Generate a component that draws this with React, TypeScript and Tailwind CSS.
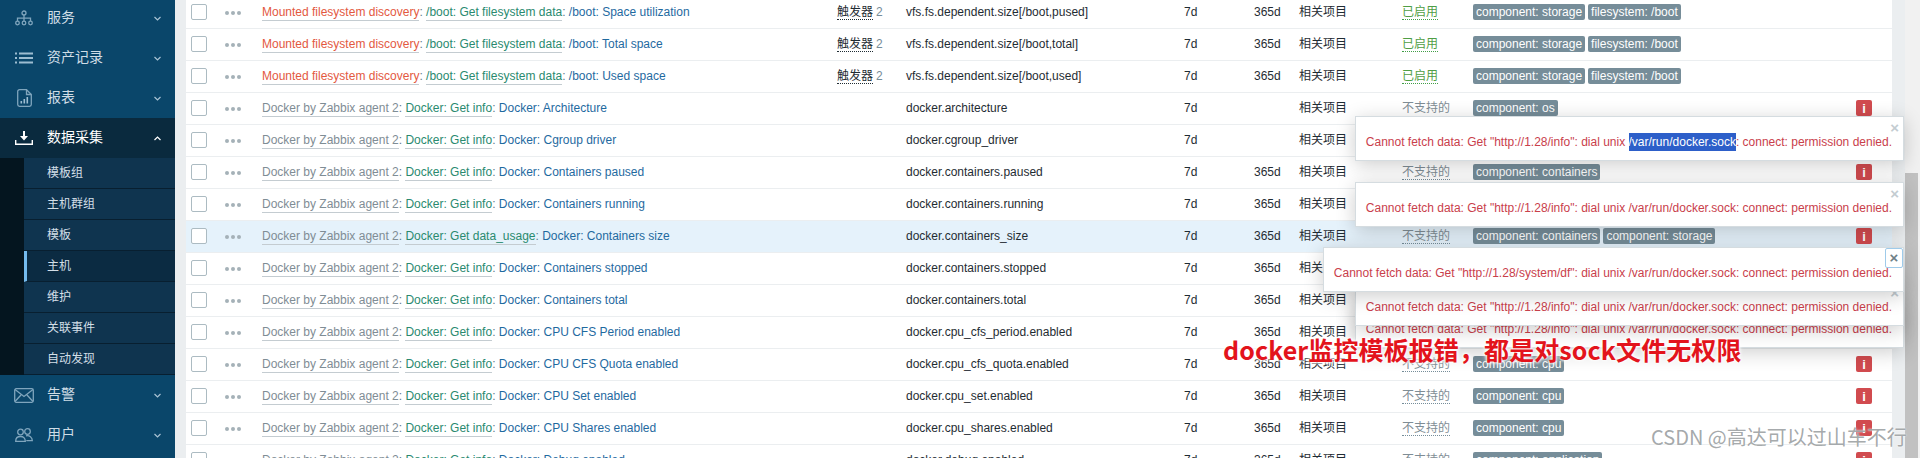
import React from "react";

const FONT = "[font-family:'Liberation_Sans','Noto_Sans_CJK_SC',sans-serif]";

type Row = {
  prefix: string;
  red?: boolean;
  group: string;
  name: string;
  trig?: boolean;
  key: string;
  hist?: boolean;
  on?: boolean;
  plainStatus?: boolean;
  tags: string[];
  hl?: boolean;
};

const D = "Docker by Zabbix agent 2";
const M = "Mounted filesystem discovery";
const GF = "/boot: Get filesystem data";
const GI = "Docker: Get info";

const rows: Row[] = [
  { prefix: M, red: true, group: GF, name: "/boot: Space utilization", trig: true, key: "vfs.fs.dependent.size[/boot,pused]", hist: true, on: true, tags: ["component: storage", "filesystem: /boot"] },
  { prefix: M, red: true, group: GF, name: "/boot: Total space", trig: true, key: "vfs.fs.dependent.size[/boot,total]", hist: true, on: true, tags: ["component: storage", "filesystem: /boot"] },
  { prefix: M, red: true, group: GF, name: "/boot: Used space", trig: true, key: "vfs.fs.dependent.size[/boot,used]", hist: true, on: true, tags: ["component: storage", "filesystem: /boot"] },
  { prefix: D, group: GI, name: "Docker: Architecture", key: "docker.architecture", plainStatus: true, tags: ["component: os"] },
  { prefix: D, group: GI, name: "Docker: Cgroup driver", key: "docker.cgroup_driver", tags: ["component: os"] },
  { prefix: D, group: GI, name: "Docker: Containers paused", key: "docker.containers.paused", hist: true, tags: ["component: containers"] },
  { prefix: D, group: GI, name: "Docker: Containers running", key: "docker.containers.running", hist: true, tags: ["component: containers"] },
  { prefix: D, group: "Docker: Get data_usage", name: "Docker: Containers size", key: "docker.containers_size", hist: true, tags: ["component: containers", "component: storage"], hl: true },
  { prefix: D, group: GI, name: "Docker: Containers stopped", key: "docker.containers.stopped", hist: true, tags: ["component: containers"] },
  { prefix: D, group: GI, name: "Docker: Containers total", key: "docker.containers.total", hist: true, tags: ["component: containers"] },
  { prefix: D, group: GI, name: "Docker: CPU CFS Period enabled", key: "docker.cpu_cfs_period.enabled", hist: true, tags: ["component: cpu"] },
  { prefix: D, group: GI, name: "Docker: CPU CFS Quota enabled", key: "docker.cpu_cfs_quota.enabled", hist: true, tags: ["component: cpu"] },
  { prefix: D, group: GI, name: "Docker: CPU Set enabled", key: "docker.cpu_set.enabled", hist: true, tags: ["component: cpu"] },
  { prefix: D, group: GI, name: "Docker: CPU Shares enabled", key: "docker.cpu_shares.enabled", hist: true, tags: ["component: cpu"] },
  { prefix: D, group: GI, name: "Docker: Debug enabled", key: "docker.debug.enabled", hist: true, tags: ["component: application"] },
];

const S = { fill: "none", stroke: "#7fa5bd", strokeWidth: 1.3 } as const;

function IconServices() {
  return (
    <svg width="18" height="16" viewBox="0 0 18 16" {...S}>
      <circle cx="9" cy="3" r="2" />
      <circle cx="2.5" cy="13" r="1.8" />
      <circle cx="9" cy="13" r="1.8" />
      <circle cx="15.5" cy="13" r="1.8" />
      <path d="M9 5v6M2.5 11V8.2h13V11" />
    </svg>
  );
}
function IconList() {
  return (
    <svg width="18" height="12" viewBox="0 0 18 12" fill="#9dbdd1">
      <rect x="0" y="0.5" width="2" height="2" />
      <rect x="0" y="5" width="2" height="2" />
      <rect x="0" y="9.5" width="2" height="2" />
      <rect x="4" y="0.5" width="14" height="2" />
      <rect x="4" y="5" width="14" height="2" />
      <rect x="4" y="9.5" width="14" height="2" />
    </svg>
  );
}
function IconReport() {
  return (
    <svg width="15" height="18" viewBox="0 0 15 18" {...S}>
      <path d="M2.5 .7h7l4.800 4.800v10a1.800 1.800 0 0 1-1.800 1.800h-10A1.800 1.800 0 0 1 .7 15.500v-13A1.800 1.800 0 0 1 2.500 .7z" />
      <path d="M9.500 .7v4.800h4.800" />
      <rect x="3.500" y="12" width="1.600" height="2.500" fill="#9dbdd1" stroke="none" />
      <rect x="6.500" y="10" width="1.600" height="4.500" fill="#9dbdd1" stroke="none" />
      <rect x="9.500" y="8" width="1.600" height="6.500" fill="#9dbdd1" stroke="none" />
    </svg>
  );
}
function IconDownload() {
  return (
    <svg width="18" height="15" viewBox="0 0 18 15" fill="#fff">
      <path d="M8 0h2v5h3l-4 4.500L5 5h3z" />
      <path d="M0 9h1.400v3.600h15.200V9H18v5H0z" />
    </svg>
  );
}
function IconMail() {
  return (
    <svg width="20" height="15" viewBox="0 0 20 15" {...S}>
      <rect x=".7" y=".7" width="18.600" height="13.600" rx="1.500" />
      <path d="M1 1.500l9 7 9-7M1 13.500l6-6.500M19 13.500l-6-6.500" />
    </svg>
  );
}
function IconUsers() {
  return (
    <svg width="18" height="14" viewBox="0 0 18 14" {...S}>
      <circle cx="5.500" cy="4" r="2.800" />
      <circle cx="12.500" cy="3.500" r="2.800" />
      <path d="M.7 13.300c0-3 2-4.800 4.800-4.800s4.800 1.800 4.800 4.800zM11 7.800c3.500-.8 6.300 1.500 6.300 4.800h-6" />
    </svg>
  );
}
function Chevron({ up }: { up?: boolean }) {
  return (
    <svg width="7" height="5" viewBox="0 0 7 5" fill="none" stroke={up ? "#fff" : "#a9c3d4"} strokeWidth="1.2" className="ml-auto mr-[14px]">
      <path d={up ? "M.5 4L3.500 1l3 3" : "M.5 1l3 3 3-3"} />
    </svg>
  );
}

function MenuItem({ icon, label, active }: { icon: React.ReactNode; label: string; active?: boolean }) {
  return (
    <div className={`flex h-[40px] items-center text-[14px] ${active ? "bg-[#0a2a3e] text-white" : "text-[#cfdde6]"}`}>
      <span className="mr-[-1px] flex w-[48px] justify-center px-[1px]">{icon}</span>
      <span className="pb-[2px]">{label}</span>
      <Chevron up={active} />
    </div>
  );
}

function Sidebar() {
  const subs = ["模板组", "主机群组", "模板", "主机", "维护", "关联事件", "自动发现"];
  return (
    <div className="-mt-[2px] w-[175px] shrink-0 bg-[#0a466a]">
      <MenuItem icon={<IconServices />} label="服务" />
      <MenuItem icon={<IconList />} label="资产记录" />
      <MenuItem icon={<IconReport />} label="报表" />
      <MenuItem icon={<IconDownload />} label="数据采集" active />
      <div className="bg-[#04151f] pl-[24px]">
        {subs.map((s) => (
          <div
            key={s}
            className={`flex h-[31px] items-center border-b border-[#081f30] text-[12px] text-[#d3dfe7] ${s === "主机" ? "border-l-[3px] border-l-[#74bbee] bg-[#0b2b42] pl-[20px]" : "bg-[#0f344f] pl-[23px]"}`}
          >
            {s}
          </div>
        ))}
      </div>
      <MenuItem icon={<IconMail />} label="告警" />
      <MenuItem icon={<IconUsers />} label="用户" />
      <div className="h-[10px]" />
    </div>
  );
}

function Dots() {
  return (
    <div className="flex gap-[2px] pt-[1px]">
      <i className="block h-[4px] w-[4px] rounded-full bg-[#a5b1b8]" />
      <i className="block h-[4px] w-[4px] rounded-full bg-[#a5b1b8]" />
      <i className="block h-[4px] w-[4px] rounded-full bg-[#a5b1b8]" />
    </div>
  );
}

function Info() {
  return (
    <div className="flex h-[16px] w-[16px] items-center justify-center rounded-[2px] bg-[#d14b4f] text-[13px] font-bold leading-none text-white">
      i
    </div>
  );
}

function TableRow({ r }: { r: Row }) {
  return (
    <div
      className={`grid h-[32px] grid-cols-[39px_37px_575px_69px_278px_70px_45px_103px_71px_383px_1fr] items-center border-b border-[#ebeef0] pb-[1px] text-[#1f2c33] ${r.hl ? "bg-[#e5f2fb]" : "bg-white"}`}
    >
      <div className="pl-[5px]">
        <div className="h-[16px] w-[16px] rounded-[2px] border border-[#acbbc2] bg-white" />
      </div>
      <Dots />
      <div className="whitespace-nowrap">
        <span className={`border-b border-[#c4ccd1] pb-[1px] ${r.red ? "text-[#e3593f]" : "text-[#7f8d95]"}`}>{r.prefix}</span>
        <span className="text-[#5f7a88]">: </span>
        <span className="border-b border-[#c4ccd1] pb-[1px] text-[#2a8a6f]">{r.group}</span>
        <span className="text-[#5f7a88]">: </span>
        <span className="text-[#1f6a9f]">{r.name}</span>
      </div>
      <div>
        {r.trig && (
          <>
            <span className="border-b border-dotted border-[#1f2c33]">触发器</span>
            <span className="ml-[3px] text-[#768d99]">2</span>
          </>
        )}
      </div>
      <div className="whitespace-nowrap">{r.key}</div>
      <div>7d</div>
      <div>{r.hist ? "365d" : ""}</div>
      <div>相关项目</div>
      <div>
        <span
          className={`${r.plainStatus ? "" : "border-b border-dotted"} ${r.on ? "border-[#429e47] text-[#4f9e45]" : "border-[#768d99] text-[#7f8d95]"}`}
        >
          {r.on ? "已启用" : "不支持的"}
        </span>
      </div>
      <div className="flex gap-[3px]">
        {r.tags.map((t) => (
          <span key={t} className="flex h-[16px] items-center rounded-[2px] bg-[#768d99] px-[3px] text-white">
            {t}
          </span>
        ))}
      </div>
      <div>{!r.on && <Info />}</div>
    </div>
  );
}

function Popup({ top, children, focus, z }: { top: string; children: React.ReactNode; focus?: boolean; z: string }) {
  return (
    <div
      className={`absolute ${top} right-[16px] ${z} h-[45px] border border-[#d5dce0] bg-white pl-[10px] pr-[11px] pt-[18px] text-[12px] leading-[14px] whitespace-nowrap text-[#c9404b] shadow-[0_4px_20px_rgba(0,0,0,0.2)]`}
    >
      {children}
      {focus ? (
        <div className="absolute right-0 top-0 flex h-[20px] w-[18px] items-center justify-center rounded-[2px] border border-[#9fcbea] bg-white text-[15px] font-bold text-[#6f7f88]">
          ×
        </div>
      ) : (
        <div className="absolute right-[4px] top-[2px] text-[15px] font-bold leading-[18px] text-[#c3ccd1]">×</div>
      )}
    </div>
  );
}

export default function App() {
  return (
    <div className={`relative flex h-[458px] w-[1920px] overflow-hidden bg-[#ebeef0] text-[12px] ${FONT}`}>
      <Sidebar />
      <div className="-mt-[3px] ml-[11px] w-[1706px] shrink-0">
        {rows.map((r) => (
          <TableRow key={r.key} r={r} />
        ))}
      </div>
      <div className="ml-[13px] flex w-[15px] flex-col bg-[#f1f1f1] pt-[173px]">
        <div className="h-full w-[13px] bg-[#c1c1c1]" />
      </div>

      <Popup top="top-[116px]" z="z-20">
        Cannot fetch data: Get "http://1.28/info": dial unix{" "}
        <span className="bg-[#2d5fc9] py-[2px] text-white">/var/run/docker.sock</span>: connect: permission denied.
      </Popup>
      <Popup top="top-[182px]" z="z-20">
        Cannot fetch data: Get "http://1.28/info": dial unix /var/run/docker.sock: connect: permission denied.
      </Popup>
      <Popup top="top-[303px]" z="z-10">
        Cannot fetch data: Get "http://1.28/info": dial unix /var/run/docker.sock: connect: permission denied.
      </Popup>
      <Popup top="top-[281px]" z="z-20">
        Cannot fetch data: Get "http://1.28/info": dial unix /var/run/docker.sock: connect: permission denied.
      </Popup>
      <Popup top="top-[247px]" z="z-30" focus>
        Cannot fetch data: Get "http://1.28/system/df": dial unix /var/run/docker.sock: connect: permission denied.
      </Popup>

      <div className="absolute left-[1223px] top-[332px] z-40 whitespace-nowrap text-[25px] font-bold leading-[34px] tracking-[0.1px] text-[#e3141c] [font-family:'Noto_Sans_CJK_SC',sans-serif] [text-shadow:0_0_3px_#fff,0_0_3px_#fff,0_0_5px_#fff]">
        docker监控模板报错，都是对sock文件无权限
      </div>
      <div className="absolute left-[1651px] top-[425px] z-40 whitespace-nowrap text-[20px] leading-[24px] text-[#9a9ea1]/90 [font-family:'Noto_Sans_CJK_SC',sans-serif] [text-shadow:0_0_2px_#fff]">
        CSDN @高达可以过山车不行
      </div>
    </div>
  );
}
